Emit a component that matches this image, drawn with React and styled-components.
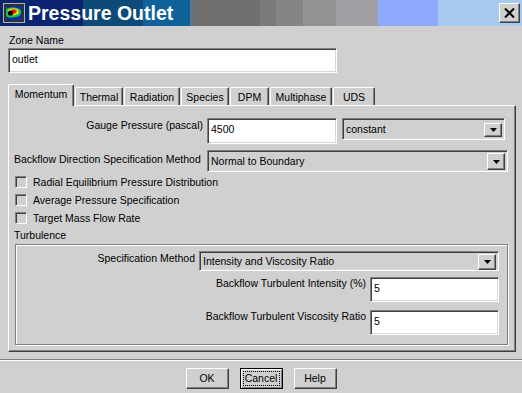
import React from 'react';
import styled, { createGlobalStyle } from 'styled-components';

const GlobalStyle = createGlobalStyle`
  html, body {
    margin: 0;
    padding: 0;
    background: #d0d0d0;
  }
  body {
    font-family: "Liberation Sans", Arial, sans-serif;
  }
  * {
    box-sizing: border-box;
  }
`;

const Window = styled.div`
  width: 522px;
  height: 393px;
  background: #d0d0d0;
  color: #000;
  font-size: 10.5px;
  overflow: hidden;
  display: flex;
  flex-direction: column;
`;

const TitleBar = styled.div`
  height: 26px;
  flex: none;
  display: flex;
  align-items: center;
  padding: 0 2px 0 3px;
  background: linear-gradient(
    to right,
    #0a2470 0 83px,
    #0d4a78 83px 143px,
    #0f6199 143px 190px,
    #5f7590 190px 193px,
    #6f6f6f 193px 260px,
    #7a7a7a 260px 276px,
    #858585 276px 303px,
    #939393 303px 336px,
    #a19fa3 336px 378px,
    #8fa9ff 378px 438px,
    #a7caf0 438px
  );
`;

const TitleText = styled.span`
  margin-left: 3px;
  color: #fff;
  font-family: "Liberation Sans", Arial, sans-serif;
  font-weight: bold;
  font-size: 19.5px;
  line-height: 20px;
`;

const CloseButton = styled.div`
  margin-left: auto;
  width: 21px;
  height: 20px;
  display: flex;
  align-items: center;
  justify-content: center;
  background: #d0d0d0;
  border: 1px solid;
  border-color: #fff #404040 #404040 #fff;
  box-shadow: inset -1px -1px 0 #808080;
`;

const Body = styled.div`
  padding: 8px 6px 0 8px;
  display: flex;
  flex-direction: column;
`;

const ZoneLabel = styled.div`
  height: 13px;
  line-height: 13px;
  padding-left: 1px;
  margin-bottom: 1px;
`;

const TextField = styled.div`
  width: ${(p) => p.$w}px;
  height: ${(p) => p.$h}px;
  flex: none;
  background: #fff;
  border: 1px solid;
  border-color: #808080 #fff #fff #808080;
  box-shadow: inset 1px 1px 0 #404040, inset -1px -1px 0 #d8d8d8;
  padding: 0 3px;
  display: flex;
  align-items: center;
  line-height: 13px;
  padding-bottom: ${(p) => (p.$h > 24 ? 3 : 0)}px;
`;

const TabRow = styled.div`
  margin-top: 11px;
  height: 21px;
  display: flex;
  align-items: flex-end;
  position: relative;
  z-index: 1;
`;

const Tab = styled.div`
  width: ${(p) => p.$w}px;
  height: ${(p) => (p.$active ? 22 : 18)}px;
  margin-bottom: ${(p) => (p.$active ? -1 : 0)}px;
  margin-right: 1px;
  padding-top: 3px;
  text-align: center;
  background: #d0d0d0;
  border-top: 1px solid #fff;
  border-left: 1px solid #fff;
  border-right: 1px solid #404040;
  box-shadow: inset -1px 0 0 #808080;
  border-radius: 2px 2px 0 0;
  line-height: 13px;
  white-space: nowrap;
`;

const Panel = styled.div`
  width: 508px;
  height: 247px;
  border: 1px solid;
  border-color: #fff #404040 #404040 #fff;
  box-shadow: inset -1px -1px 0 #808080;
  padding: 12px 0 0 5px;
  display: flex;
  flex-direction: column;
`;

const FieldRow = styled.div`
  display: flex;
  align-items: flex-start;
  margin-top: ${(p) => p.$mt || 0}px;
  justify-content: ${(p) => (p.$right ? 'flex-end' : 'flex-start')};
`;

const Label = styled.div`
  width: ${(p) => (p.$w ? `${p.$w}px` : 'auto')};
  flex: none;
  text-align: ${(p) => p.$align || 'right'};
  padding-top: ${(p) => p.$pt || 0}px;
  margin-right: 4px;
  line-height: 13px;
  white-space: nowrap;
`;

const Combo = styled.div`
  width: ${(p) => p.$w}px;
  height: ${(p) => p.$h}px;
  margin-left: ${(p) => p.$ml || 0}px;
  flex: none;
  display: flex;
  align-items: center;
  background: #d0d0d0;
  border: 1px solid;
  border-color: #808080 #fff #fff #808080;
  box-shadow: inset 1px 1px 0 #404040, inset -1px -1px 0 #d8d8d8;
  padding: 1px 2px 0 3px;
  line-height: 13px;
`;

const ComboText = styled.span`
  flex: 1;
  white-space: nowrap;
`;

const ArrowButton = styled.div`
  width: 18px;
  height: ${(p) => p.$h}px;
  display: flex;
  align-items: center;
  justify-content: center;
  border: 1px solid;
  border-color: #fff #404040 #404040 #fff;
  box-shadow: inset -1px -1px 0 #808080;
`;

const CheckRow = styled.div`
  height: 18px;
  display: flex;
  align-items: center;
  padding-left: 1px;
  margin-top: ${(p) => p.$mt || 0}px;
`;

const CheckBox = styled.div`
  width: 12px;
  height: 12px;
  margin-right: 6px;
  background: #d0d0d0;
  border: 1px solid;
  border-color: #808080 #fff #fff #808080;
  box-shadow: inset 1px 1px 0 #404040;
`;

const SectionLabel = styled.div`
  margin-top: 2px;
  height: 13px;
  line-height: 13px;
`;

const GroupBox = styled.div`
  margin: 2px 0 0 1px;
  width: 493px;
  height: 101px;
  border: 1px solid #808080;
  box-shadow: inset 1px 1px 0 #fff, 1px 1px 0 #fff;
  padding: 6px 8px 0 0;
  display: flex;
  flex-direction: column;
`;

const Separator = styled.div`
  margin-top: 7px;
  height: 2px;
  border-top: 1px solid #808080;
  border-bottom: 1px solid #fff;
`;

const ButtonRow = styled.div`
  margin-top: 7px;
  display: flex;
  justify-content: center;
  gap: 11px;
`;

const Button = styled.div`
  width: 43px;
  height: 21px;
  display: flex;
  align-items: center;
  justify-content: center;
  line-height: 13px;
  border: 1px solid;
  border-color: ${(p) => (p.$focused ? '#000' : '#fff #404040 #404040 #fff')};
  box-shadow: ${(p) =>
    p.$focused ? 'inset 1px 1px 0 #fff, inset -1px -1px 0 #808080' : 'inset -1px -1px 0 #808080'};
  outline: ${(p) => (p.$focused ? '1px dotted #000' : 'none')};
  outline-offset: -4px;
`;

const AppIcon = () => (
  <svg width="22" height="20" viewBox="0 0 22 20">
    <rect x="0.5" y="0.5" width="21" height="19" fill="#303030" stroke="#b0b0b0" />
    <rect x="3" y="3" width="16" height="14" fill="#1030a0" />
    <path d="M3 6 Q8 3 14 5 Q19 6 18 10 Q17 14 12 14 Q6 16 3 13 Z" fill="#20c040" />
    <path d="M5 7 Q9 4 14 6 Q17 8 15 11 Q11 13 6 12 Z" fill="#f0e020" />
    <path d="M8 7 Q12 5 14 8 Q13 11 9 11 Z" fill="#e02010" />
    <circle cx="7.5" cy="10" r="2.6" fill="#000" />
  </svg>
);

const CloseIcon = () => (
  <svg width="11" height="10" viewBox="0 0 11 10">
    <path d="M1 0.5 L10 9.5 M10 0.5 L1 9.5" stroke="#000" strokeWidth="2" />
  </svg>
);

const DownArrow = () => (
  <svg width="7" height="4" viewBox="0 0 7 4">
    <path d="M0 0 H7 L3.5 4 Z" fill="#000" />
  </svg>
);

const Dropdown = ({ w, h, ml, value, btn }) => (
  <Combo $w={w} $h={h} $ml={ml}>
    <ComboText>{value}</ComboText>
    <ArrowButton $h={btn}>
      <DownArrow />
    </ArrowButton>
  </Combo>
);

const tabs = [
  { name: 'Momentum', w: 66 },
  { name: 'Thermal', w: 48 },
  { name: 'Radiation', w: 56 },
  { name: 'Species', w: 48 },
  { name: 'DPM', w: 39 },
  { name: 'Multiphase', w: 62 },
  { name: 'UDS', w: 42 },
];

const checks = [
  'Radial Equilibrium Pressure Distribution',
  'Average Pressure Specification',
  'Target Mass Flow Rate',
];

export default function App() {
  return (
    <>
      <GlobalStyle />
      <Window>
        <TitleBar>
          <AppIcon />
          <TitleText>Pressure Outlet</TitleText>
          <CloseButton>
            <CloseIcon />
          </CloseButton>
        </TitleBar>

        <Body>
          <ZoneLabel>Zone Name</ZoneLabel>
          <TextField $w={329} $h={25}>outlet</TextField>

          <TabRow>
            {tabs.map((t, i) => (
              <Tab key={t.name} $w={t.w} $active={i === 0}>
                {t.name}
              </Tab>
            ))}
          </TabRow>

          <Panel>
            <FieldRow>
              <Label $w={189} $pt={1}>Gauge Pressure (pascal)</Label>
              <TextField $w={130} $h={26}>4500</TextField>
              <Dropdown w={163} h={22} ml={5} value="constant" btn={14} />
            </FieldRow>

            <FieldRow $mt={6}>
              <Label $w={189} $align="left" $pt={3}>
                Backflow Direction Specification Method
              </Label>
              <Dropdown w={301} h={22} value="Normal to Boundary" btn={17} />
            </FieldRow>

            {checks.map((c, i) => (
              <CheckRow key={c} $mt={i === 0 ? 1 : 0}>
                <CheckBox />
                {c}
              </CheckRow>
            ))}

            <SectionLabel>Turbulence</SectionLabel>
            <GroupBox>
              <FieldRow $right>
                <Label $pt={1}>Specification Method</Label>
                <Dropdown w={300} h={20} value="Intensity and Viscosity Ratio" btn={16} />
              </FieldRow>
              <FieldRow $right $mt={6}>
                <Label>Backflow Turbulent Intensity (%)</Label>
                <TextField $w={129} $h={25}>5</TextField>
              </FieldRow>
              <FieldRow $right $mt={8}>
                <Label>Backflow Turbulent Viscosity Ratio</Label>
                <TextField $w={129} $h={25}>5</TextField>
              </FieldRow>
            </GroupBox>
          </Panel>
        </Body>

        <Separator />
        <ButtonRow>
          <Button>OK</Button>
          <Button $focused>Cancel</Button>
          <Button>Help</Button>
        </ButtonRow>
      </Window>
    </>
  );
}
